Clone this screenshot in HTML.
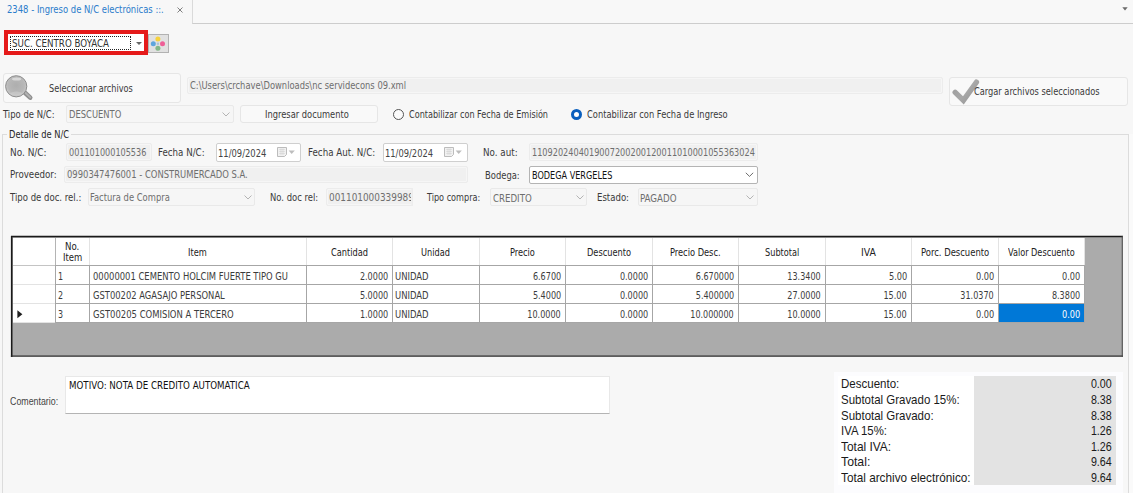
<!DOCTYPE html>
<html lang="es">
<head>
<meta charset="utf-8">
<title>2348 - Ingreso de N/C electrónicas</title>
<style>
html,body{margin:0;padding:0}
body{width:1133px;height:493px;overflow:hidden;background:#f7f7f7;position:relative;font-family:"DejaVu Sans Condensed","Liberation Sans",sans-serif;font-size:10px}
.b{position:absolute;box-sizing:border-box}
.x{position:absolute;white-space:pre;line-height:14px;height:14px}
.t{font-family:"DejaVu Sans Condensed","Liberation Sans",sans-serif}
.a{font-family:"Liberation Sans",sans-serif}
.dis{background:#f0f0f0;border:1px solid #ececec;border-radius:2px;box-shadow:inset 0 0 0 1px #f6f6f6}
.cmb{background:#f6f6f6;border:1px solid #e9e9e9;border-radius:2px}
.btn{background:#f9f9f9;border:1px solid #e6e6e6;border-radius:3px}
.date{background:#fff;border:1px solid #cfcfcf;border-radius:2px}
svg{position:absolute;overflow:visible}
.hl{position:absolute;background:#e3e3e3}
.vl{position:absolute;background:#a6a6a6;width:1px}
.rl{position:absolute;background:#a6a6a6;height:1px}
</style>
</head>
<body>
<!-- tab strip -->
<div class="b" style="left:192px;top:0;width:941px;height:24px;border-left:1px solid #dadada;border-bottom:1px solid #cdcdcd;background:#f8f8f8"></div>
<svg style="left:175.7px;top:6.2px" width="8" height="8" viewBox="0 0 8 8"><path d="M1.5 1.5 L6.5 6.5 M6.5 1.5 L1.5 6.5" stroke="#808080" stroke-width="1" fill="none"/></svg>
<svg style="left:1122px;top:7px" width="6" height="4" viewBox="0 0 6 4"><path d="M0.3 0.3 L5.7 0.3 L3 3.4 Z" fill="#6b6b6b"/></svg>

<!-- sucursal combo with red highlight -->
<div class="b" style="left:4px;top:30px;width:144px;height:25px;background:#e51a1a"></div>
<div class="b" style="left:8px;top:34px;width:136px;height:17px;background:#fff"></div>
<div class="b" style="left:10px;top:36px;width:121px;height:14px;border:1px dotted #222"></div>
<svg style="left:136px;top:42px" width="6" height="3" viewBox="0 0 6 3"><path d="M0 0 L6 0 L3 3 Z" fill="#666"/></svg>
<div class="b" style="left:148px;top:34px;width:21px;height:19px;background:#e1e1e1;border:1px solid #b2b2b2"></div>
<svg style="left:149px;top:35px" width="19" height="17" viewBox="149 35 19 17">
  <rect x="156.8" y="42.6" width="2.2" height="2.2" fill="#a9c4d8"/>
  <circle cx="157.9" cy="39.1" r="2.5" fill="#f7d23c"/>
  <circle cx="153.3" cy="43.7" r="2.5" fill="#5ea5dd"/>
  <circle cx="162.5" cy="43.7" r="2.5" fill="#ee5f97"/>
  <circle cx="157.9" cy="48.3" r="2.5" fill="#84b787"/>
</svg>

<!-- Seleccionar archivos button -->
<div class="b btn" style="left:3px;top:73px;width:178px;height:30px"></div>
<svg style="left:4px;top:74px" width="30" height="28" viewBox="4 74 30 28">
  <defs>
    <radialGradient id="g1" cx="0.5" cy="0.45" r="0.55">
      <stop offset="0" stop-color="#aeaeae"/><stop offset="0.7" stop-color="#b8b8b8"/><stop offset="1" stop-color="#cdcdcd"/>
    </radialGradient>
  </defs>
  <path d="M25.2 93 L30.2 97.6" stroke="#8f8f8f" stroke-width="4.6" stroke-linecap="round"/>
  <path d="M25.6 93 L30.2 97.4" stroke="#b2b2b2" stroke-width="2" stroke-linecap="round"/>
  <circle cx="16.2" cy="86.3" r="10.6" fill="url(#g1)" stroke="#8c8c8c" stroke-width="1"/>
  <ellipse cx="16.6" cy="79" rx="4.6" ry="1.6" fill="#dedede" opacity="0.85"/>
  <ellipse cx="16.2" cy="93.6" rx="6" ry="2" fill="#d2d2d2" opacity="0.5"/>
</svg>
<!-- path field -->
<div class="b dis" style="left:187px;top:77px;width:756px;height:17px"></div>
<!-- Cargar button -->
<div class="b btn" style="left:949px;top:77px;width:179px;height:29px"></div>
<svg style="left:950px;top:78px" width="32" height="27" viewBox="950 78 32 27">
  <defs><linearGradient id="g2" gradientUnits="userSpaceOnUse" x1="952" y1="80" x2="980" y2="104"><stop offset="0" stop-color="#9c9c9c"/><stop offset="0.5" stop-color="#a8a8a8"/><stop offset="1" stop-color="#8e8e8e"/></linearGradient></defs>
  <path d="M955.2 92.4 L963.4 100.4 L976.4 82.2" stroke="url(#g2)" stroke-width="5.4" stroke-linecap="round" stroke-linejoin="miter" fill="none"/>
</svg>

<!-- Tipo de N/C row -->
<div class="b cmb" style="left:66px;top:105px;width:168px;height:18px"></div>
<svg style="left:222px;top:112px" width="8" height="5" viewBox="0 0 8 5"><path d="M0.5 0.5 L4 4 L7.5 0.5" stroke="#b4b4b4" stroke-width="1" fill="none"/></svg>
<div class="b btn" style="left:240px;top:105px;width:138px;height:18px"></div>
<div class="b" style="left:393px;top:109px;width:11px;height:11px;border:1px solid #555;border-radius:50%;background:#fbfbfb"></div>
<div class="b" style="left:571px;top:109px;width:11px;height:11px;border:3.2px solid #0a5fbe;border-radius:50%;background:#fff"></div>

<!-- group box -->
<div class="b" style="left:2px;top:134px;width:1127px;height:380px;border:1px solid #dcdcdc"></div>
<div class="b" style="left:7px;top:128px;width:64px;height:12px;background:#f7f7f7"></div>

<div class="b" style="left:1129px;top:134px;width:4px;height:359px;background:#fafafa"></div>
<!-- row 1 fields -->
<div class="b dis" style="left:66px;top:143px;width:86px;height:18px"></div>
<div class="b date" style="left:216px;top:143px;width:85px;height:19px"></div>
<div class="b date" style="left:383px;top:143px;width:85px;height:19px"></div>
<svg style="left:277px;top:147px" width="19" height="10" viewBox="277 147 19 10">
  <path d="M277.5 147.5 H286.5 V154.5 L284.5 156.5 H277.5 Z" fill="#f1f1f1" stroke="#b4b4b4" stroke-width="0.9"/>
  <path d="M279.3 149.5 H284.8 M279.3 151.5 H284.8 M279.3 153.5 H284.8 M281 148.5 V155 M283 148.5 V155" stroke="#d6d6d6" stroke-width="0.7"/>
  <path d="M288.6 150.4 L294.8 150.4 L291.7 154 Z" fill="#bdbdbd"/>
</svg>
<svg style="left:444px;top:147px" width="19" height="10" viewBox="277 147 19 10">
  <path d="M277.5 147.5 H286.5 V154.5 L284.5 156.5 H277.5 Z" fill="#f1f1f1" stroke="#b4b4b4" stroke-width="0.9"/>
  <path d="M279.3 149.5 H284.8 M279.3 151.5 H284.8 M279.3 153.5 H284.8 M281 148.5 V155 M283 148.5 V155" stroke="#d6d6d6" stroke-width="0.7"/>
  <path d="M288.6 150.4 L294.8 150.4 L291.7 154 Z" fill="#bdbdbd"/>
</svg>
<div class="b dis" style="left:529px;top:143px;width:229px;height:18px"></div>

<!-- row 2 fields -->
<div class="b dis" style="left:64px;top:166px;width:404px;height:17px"></div>
<div class="b" style="left:529px;top:166px;width:229px;height:18px;background:#fff;border:1px solid #b4b4b4;border-radius:2px"></div>
<svg style="left:745px;top:172px" width="9" height="6" viewBox="0 0 9 6"><path d="M0.8 0.8 L4.5 4.4 L8.2 0.8" stroke="#5c5c5c" stroke-width="0.9" fill="none"/></svg>

<!-- row 3 fields -->
<div class="b cmb" style="left:88px;top:188px;width:167px;height:18px"></div>
<svg style="left:244px;top:195px" width="8" height="5" viewBox="0 0 8 5"><path d="M0.5 0.5 L4 4 L7.5 0.5" stroke="#b4b4b4" stroke-width="1" fill="none"/></svg>
<div class="b dis" style="left:326px;top:188px;width:87px;height:18px"></div>
<div class="b cmb" style="left:490px;top:188px;width:97px;height:18px"></div>
<svg style="left:576px;top:195px" width="8" height="5" viewBox="0 0 8 5"><path d="M0.5 0.5 L4 4 L7.5 0.5" stroke="#b4b4b4" stroke-width="1" fill="none"/></svg>
<div class="b cmb" style="left:638px;top:188px;width:120px;height:18px"></div>
<svg style="left:746px;top:195px" width="8" height="5" viewBox="0 0 8 5"><path d="M0.5 0.5 L4 4 L7.5 0.5" stroke="#b4b4b4" stroke-width="1" fill="none"/></svg>

<!-- grid -->
<div class="b" style="left:12px;top:237px;width:1110px;height:119px;background:#ababab"></div>
<svg style="left:0;top:0" width="1133" height="493" viewBox="0 0 1133 493"><path d="M11 236.5 H1123" fill="none" stroke="#1a1a1a" stroke-width="1.4"/><path d="M11.7 357 V236" fill="none" stroke="#1a1a1a" stroke-width="1.6"/><path d="M10.9 356.2 H1123" fill="none" stroke="#2a2a2a" stroke-width="1.2"/><path d="M1122.3 356.8 V236" fill="none" stroke="#4a4a4a" stroke-width="1.1"/></svg>
<div class="b" style="left:13px;top:238px;width:1072px;height:85px;background:#fff"></div>
<!-- selected cell -->
<div class="b" style="left:999px;top:304px;width:85px;height:18px;background:#0078d7"></div>
<!-- header separators (light) -->
<div class="hl" style="left:13px;top:265px;width:1072px;height:1px;background:#d9d9d9"></div>
<div class="hl" style="left:55px;top:238px;width:1px;height:27px;background:#b4b4b4"></div>
<div class="hl" style="left:89px;top:238px;width:1px;height:27px"></div>
<div class="hl" style="left:306px;top:238px;width:1px;height:27px"></div>
<div class="hl" style="left:392px;top:238px;width:1px;height:27px"></div>
<div class="hl" style="left:479px;top:238px;width:1px;height:27px"></div>
<div class="hl" style="left:565px;top:238px;width:1px;height:27px"></div>
<div class="hl" style="left:652px;top:238px;width:1px;height:27px"></div>
<div class="hl" style="left:738px;top:238px;width:1px;height:27px"></div>
<div class="hl" style="left:825px;top:238px;width:1px;height:27px"></div>
<div class="hl" style="left:911px;top:238px;width:1px;height:27px"></div>
<div class="hl" style="left:998px;top:238px;width:1px;height:27px"></div>
<div class="hl" style="left:1084px;top:238px;width:1px;height:27px"></div>
<!-- row header separators (light) -->
<div class="hl" style="left:13px;top:284px;width:42px;height:1px"></div>
<div class="hl" style="left:13px;top:303px;width:42px;height:1px"></div>
<div class="hl" style="left:13px;top:322px;width:42px;height:1px"></div>
<!-- data row lines -->
<div class="rl" style="left:13px;top:265px;width:42px;background:#c4c4c4"></div>
<div class="rl" style="left:55px;top:265px;width:1030px"></div>
<div class="rl" style="left:55px;top:284px;width:1030px"></div>
<div class="rl" style="left:55px;top:303px;width:1030px"></div>
<div class="rl" style="left:55px;top:322px;width:1030px"></div>
<div class="vl" style="left:55px;top:265px;height:58px"></div>
<div class="vl" style="left:89px;top:265px;height:58px"></div>
<div class="vl" style="left:306px;top:265px;height:58px"></div>
<div class="vl" style="left:392px;top:265px;height:58px"></div>
<div class="vl" style="left:479px;top:265px;height:58px"></div>
<div class="vl" style="left:565px;top:265px;height:58px"></div>
<div class="vl" style="left:652px;top:265px;height:58px"></div>
<div class="vl" style="left:738px;top:265px;height:58px"></div>
<div class="vl" style="left:825px;top:265px;height:58px"></div>
<div class="vl" style="left:911px;top:265px;height:58px"></div>
<div class="vl" style="left:998px;top:265px;height:58px"></div>
<div class="vl" style="left:1084px;top:265px;height:58px"></div>
<!-- current row marker -->
<svg style="left:17px;top:310px" width="6" height="9" viewBox="0 0 6 9"><path d="M0.4 0.3 L5.4 4.3 L0.4 8.3 Z" fill="#1e1e1e"/></svg>

<!-- comentario -->
<div class="b" style="left:65px;top:376px;width:545px;height:38px;background:#fff;border:1px solid #e8e8e8;border-bottom:1px solid #b4b4b4"></div>

<!-- totals panel -->
<div class="b" style="left:834px;top:372px;width:289px;height:130px;background:#fcfcfe"></div>
<div class="b" style="left:838px;top:376px;width:136px;height:109px;background:#fff"></div>
<div class="b" style="left:974px;top:376px;width:142px;height:109px;background:#e3e3e3"></div>

<span class="x t" style="left:7.00px;top:2.80px;transform-origin:0 50%;transform:scaleX(0.9778);font-size:9.6px;color:#2a7ccb">2348 - Ingreso de N/C electrónicas ::.</span>
<span class="x t" style="left:11.50px;top:37.00px;transform-origin:0 50%;transform:scaleX(1.0076);font-size:9.6px;color:#333">SUC. CENTRO BOYACA</span>
<span class="x t" style="left:48.80px;top:82.00px;transform-origin:0 50%;transform:scaleX(0.9432);font-size:9.6px;color:#3a3a3a">Seleccionar archivos</span>
<span class="x t" style="left:189.50px;top:79.30px;transform-origin:0 50%;transform:scaleX(0.9684);font-size:9.6px;color:#6e6e6e">C:\Users\crchave\Downloads\nc servidecons 09.xml</span>
<span class="x t" style="left:974.30px;top:85.00px;transform-origin:0 50%;transform:scaleX(0.9556);font-size:9.6px;color:#3a3a3a">Cargar archivos seleccionados</span>
<span class="x t" style="left:3.00px;top:108.40px;transform-origin:0 50%;transform:scaleX(0.9788);font-size:9.6px;color:#3a3a3a">Tipo de N/C:</span>
<span class="x t" style="left:68.50px;top:108.40px;transform-origin:0 50%;transform:scaleX(0.9702);font-size:9.6px;color:#6e6e6e">DESCUENTO</span>
<span class="x t" style="left:265.40px;top:108.40px;transform-origin:0 50%;transform:scaleX(0.9627);font-size:9.6px;color:#3a3a3a">Ingresar documento</span>
<span class="x t" style="left:408.80px;top:108.40px;transform-origin:0 50%;transform:scaleX(0.9397);font-size:9.6px;color:#3a3a3a">Contabilizar con Fecha de Emisión</span>
<span class="x t" style="left:587.30px;top:108.40px;transform-origin:0 50%;transform:scaleX(0.9642);font-size:9.6px;color:#3a3a3a">Contabilizar con Fecha de Ingreso</span>
<span class="x t" style="left:8.80px;top:128.00px;transform-origin:0 50%;transform:scaleX(0.9614);font-size:9.6px;color:#262626">Detalle de N/C</span>
<span class="x t" style="left:9.50px;top:146.00px;transform-origin:0 50%;transform:scaleX(1.0351);font-size:9.6px;color:#3a3a3a">No. N/C:</span>
<span class="x t" style="left:68.50px;top:146.00px;transform-origin:0 50%;transform:scaleX(0.9386);font-size:9.6px;color:#6e6e6e">001101000105536</span>
<span class="x t" style="left:157.50px;top:146.00px;transform-origin:0 50%;transform:scaleX(1.0062);font-size:9.6px;color:#3a3a3a">Fecha N/C:</span>
<span class="x t" style="left:217.50px;top:146.60px;transform-origin:0 50%;transform:scaleX(0.9709);font-size:9.6px;color:#444">11/09/2024</span>
<span class="x t" style="left:308.20px;top:146.00px;transform-origin:0 50%;transform:scaleX(1.0098);font-size:9.6px;color:#3a3a3a">Fecha Aut. N/C:</span>
<span class="x t" style="left:385.20px;top:146.60px;transform-origin:0 50%;transform:scaleX(0.9668);font-size:9.6px;color:#444">11/09/2024</span>
<span class="x t" style="left:483.10px;top:146.00px;transform-origin:0 50%;transform:scaleX(1.0144);font-size:9.6px;color:#3a3a3a">No. aut:</span>
<span class="x t" style="left:532.00px;top:146.00px;transform-origin:0 50%;transform:scaleX(0.9438);font-size:9.6px;color:#6e6e6e">1109202404019007200200120011010001055363024</span>
<span class="x t" style="left:9.50px;top:168.00px;transform-origin:0 50%;transform:scaleX(1.0057);font-size:9.6px;color:#3a3a3a">Proveedor:</span>
<span class="x t" style="left:66.50px;top:168.00px;transform-origin:0 50%;transform:scaleX(0.9744);font-size:9.6px;color:#6e6e6e">0990347476001 - CONSTRUMERCADO S.A.</span>
<span class="x t" style="left:484.50px;top:169.10px;transform-origin:0 50%;transform:scaleX(0.9723);font-size:9.6px;color:#3a3a3a">Bodega:</span>
<span class="x t" style="left:531.50px;top:169.10px;transform-origin:0 50%;transform:scaleX(0.9423);font-size:9.6px;color:#111">BODEGA VERGELES</span>
<span class="x t" style="left:9.50px;top:191.20px;transform-origin:0 50%;transform:scaleX(0.9890);font-size:9.6px;color:#3a3a3a">Tipo de doc. rel.:</span>
<span class="x t" style="left:90.00px;top:191.20px;transform-origin:0 50%;transform:scaleX(0.9717);font-size:9.6px;color:#6e6e6e">Factura de Compra</span>
<span class="x t" style="left:270.10px;top:191.20px;transform-origin:0 50%;transform:scaleX(0.9766);font-size:9.6px;color:#3a3a3a">No. doc rel:</span>
<span class="x t" style="left:328.50px;top:191.20px;transform-origin:0 50%;transform:scaleX(1.0308);font-size:9.6px;color:#6e6e6e">001101000339989</span>
<span class="x t" style="left:427.00px;top:191.20px;transform-origin:0 50%;transform:scaleX(0.9408);font-size:9.6px;color:#3a3a3a">Tipo compra:</span>
<span class="x t" style="left:492.50px;top:191.50px;transform-origin:0 50%;transform:scaleX(0.9991);font-size:9.6px;color:#6e6e6e">CREDITO</span>
<span class="x t" style="left:597.30px;top:191.20px;transform-origin:0 50%;transform:scaleX(0.9908);font-size:9.6px;color:#3a3a3a">Estado:</span>
<span class="x t" style="left:640.10px;top:191.50px;transform-origin:0 50%;transform:scaleX(1.0039);font-size:9.6px;color:#6e6e6e">PAGADO</span>
<span class="x t" style="left:65.00px;top:240.30px;transform-origin:0 50%;transform:scaleX(0.9991);font-size:9.6px;color:#222">No.</span>
<span class="x t" style="left:62.50px;top:250.50px;transform-origin:0 50%;transform:scaleX(0.9819);font-size:9.6px;color:#222">Item</span>
<span class="x t" style="left:188.00px;top:246.40px;transform-origin:0 50%;transform:scaleX(0.9564);font-size:9.6px;color:#222">Item</span>
<span class="x t" style="left:330.90px;top:246.40px;transform-origin:0 50%;transform:scaleX(0.9555);font-size:9.6px;color:#222">Cantidad</span>
<span class="x t" style="left:421.00px;top:246.40px;transform-origin:0 50%;transform:scaleX(0.9523);font-size:9.6px;color:#222">Unidad</span>
<span class="x t" style="left:509.80px;top:246.40px;transform-origin:0 50%;transform:scaleX(0.9537);font-size:9.6px;color:#222">Precio</span>
<span class="x t" style="left:586.70px;top:246.40px;transform-origin:0 50%;transform:scaleX(0.9561);font-size:9.6px;color:#222">Descuento</span>
<span class="x t" style="left:669.80px;top:246.40px;transform-origin:0 50%;transform:scaleX(0.9584);font-size:9.6px;color:#222">Precio Desc.</span>
<span class="x t" style="left:764.50px;top:246.40px;transform-origin:0 50%;transform:scaleX(0.9483);font-size:9.6px;color:#222">Subtotal</span>
<span class="x t" style="left:861.10px;top:246.40px;transform-origin:0 50%;transform:scaleX(1.0836);font-size:9.6px;color:#222">IVA</span>
<span class="x t" style="left:920.50px;top:246.40px;transform-origin:0 50%;transform:scaleX(0.9767);font-size:9.6px;color:#222">Porc. Descuento</span>
<span class="x t" style="left:1007.50px;top:246.40px;transform-origin:0 50%;transform:scaleX(0.9457);font-size:9.6px;color:#222">Valor Descuento</span>
<span class="x t" style="left:57.90px;top:269.70px;transform-origin:0 50%;transform:scaleX(0.9273);font-size:9.6px;color:#3c3c3c">1</span>
<span class="x t" style="left:92.50px;top:269.70px;transform-origin:0 50%;transform:scaleX(0.9739);font-size:9.6px;color:#3c3c3c">00000001 CEMENTO HOLCIM FUERTE TIPO GU</span>
<span class="x t" style="right:744.70px;top:269.70px;transform-origin:100% 50%;transform:scaleX(0.9370);font-size:9.6px;color:#3c3c3c">2.0000</span>
<span class="x t" style="left:394.80px;top:269.70px;transform-origin:0 50%;transform:scaleX(0.9779);font-size:9.6px;color:#3c3c3c">UNIDAD</span>
<span class="x t" style="right:571.90px;top:269.70px;transform-origin:100% 50%;transform:scaleX(0.9370);font-size:9.6px;color:#3c3c3c">6.6700</span>
<span class="x t" style="right:484.90px;top:269.70px;transform-origin:100% 50%;transform:scaleX(0.9370);font-size:9.6px;color:#3c3c3c">0.0000</span>
<span class="x t" style="right:398.90px;top:269.70px;transform-origin:100% 50%;transform:scaleX(0.9312);font-size:9.6px;color:#3c3c3c">6.670000</span>
<span class="x t" style="right:311.90px;top:269.70px;transform-origin:100% 50%;transform:scaleX(0.9337);font-size:9.6px;color:#3c3c3c">13.3400</span>
<span class="x t" style="right:225.90px;top:269.70px;transform-origin:100% 50%;transform:scaleX(0.9501);font-size:9.6px;color:#3c3c3c">5.00</span>
<span class="x t" style="right:138.90px;top:269.70px;transform-origin:100% 50%;transform:scaleX(0.9501);font-size:9.6px;color:#3c3c3c">0.00</span>
<span class="x t" style="right:52.90px;top:269.70px;transform-origin:100% 50%;transform:scaleX(0.9501);font-size:9.6px;color:#3c3c3c">0.00</span>
<span class="x t" style="left:57.90px;top:288.70px;transform-origin:0 50%;transform:scaleX(0.9273);font-size:9.6px;color:#3c3c3c">2</span>
<span class="x t" style="left:92.50px;top:288.70px;transform-origin:0 50%;transform:scaleX(0.9713);font-size:9.6px;color:#3c3c3c">GST00202 AGASAJO PERSONAL</span>
<span class="x t" style="right:744.70px;top:288.70px;transform-origin:100% 50%;transform:scaleX(0.9370);font-size:9.6px;color:#3c3c3c">5.0000</span>
<span class="x t" style="left:394.80px;top:288.70px;transform-origin:0 50%;transform:scaleX(0.9779);font-size:9.6px;color:#3c3c3c">UNIDAD</span>
<span class="x t" style="right:571.90px;top:288.70px;transform-origin:100% 50%;transform:scaleX(0.9370);font-size:9.6px;color:#3c3c3c">5.4000</span>
<span class="x t" style="right:484.90px;top:288.70px;transform-origin:100% 50%;transform:scaleX(0.9370);font-size:9.6px;color:#3c3c3c">0.0000</span>
<span class="x t" style="right:398.90px;top:288.70px;transform-origin:100% 50%;transform:scaleX(0.9312);font-size:9.6px;color:#3c3c3c">5.400000</span>
<span class="x t" style="right:311.90px;top:288.70px;transform-origin:100% 50%;transform:scaleX(0.9337);font-size:9.6px;color:#3c3c3c">27.0000</span>
<span class="x t" style="right:225.90px;top:288.70px;transform-origin:100% 50%;transform:scaleX(0.9424);font-size:9.6px;color:#3c3c3c">15.00</span>
<span class="x t" style="right:138.90px;top:288.70px;transform-origin:100% 50%;transform:scaleX(0.9337);font-size:9.6px;color:#3c3c3c">31.0370</span>
<span class="x t" style="right:52.90px;top:288.70px;transform-origin:100% 50%;transform:scaleX(0.9370);font-size:9.6px;color:#3c3c3c">8.3800</span>
<span class="x t" style="left:57.90px;top:307.70px;transform-origin:0 50%;transform:scaleX(0.9273);font-size:9.6px;color:#3c3c3c">3</span>
<span class="x t" style="left:92.50px;top:307.70px;transform-origin:0 50%;transform:scaleX(0.9796);font-size:9.6px;color:#3c3c3c">GST00205 COMISION A TERCERO</span>
<span class="x t" style="right:744.70px;top:307.70px;transform-origin:100% 50%;transform:scaleX(0.9370);font-size:9.6px;color:#3c3c3c">1.0000</span>
<span class="x t" style="left:394.80px;top:307.70px;transform-origin:0 50%;transform:scaleX(0.9779);font-size:9.6px;color:#3c3c3c">UNIDAD</span>
<span class="x t" style="right:571.90px;top:307.70px;transform-origin:100% 50%;transform:scaleX(0.9337);font-size:9.6px;color:#3c3c3c">10.0000</span>
<span class="x t" style="right:484.90px;top:307.70px;transform-origin:100% 50%;transform:scaleX(0.9370);font-size:9.6px;color:#3c3c3c">0.0000</span>
<span class="x t" style="right:398.90px;top:307.70px;transform-origin:100% 50%;transform:scaleX(0.9290);font-size:9.6px;color:#3c3c3c">10.000000</span>
<span class="x t" style="right:311.90px;top:307.70px;transform-origin:100% 50%;transform:scaleX(0.9337);font-size:9.6px;color:#3c3c3c">10.0000</span>
<span class="x t" style="right:225.90px;top:307.70px;transform-origin:100% 50%;transform:scaleX(0.9424);font-size:9.6px;color:#3c3c3c">15.00</span>
<span class="x t" style="right:138.90px;top:307.70px;transform-origin:100% 50%;transform:scaleX(0.9501);font-size:9.6px;color:#3c3c3c">0.00</span>
<span class="x t" style="right:52.90px;top:307.70px;transform-origin:100% 50%;transform:scaleX(0.9501);font-size:9.6px;color:#fff">0.00</span>
<span class="x t" style="left:68.70px;top:379.30px;transform-origin:0 50%;transform:scaleX(1.0070);font-size:9.6px;color:#111">MOTIVO: NOTA DE CREDITO AUTOMATICA</span>
<span class="x a" style="left:10.10px;top:394.20px;transform-origin:0 50%;transform:scaleX(0.8409);font-size:10.5px;color:#444">Comentario:</span>
<span class="x a" style="left:841.00px;top:377.40px;transform-origin:0 50%;transform:scaleX(0.9456);font-size:12.2px;color:#1a1a1a">Descuento:</span>
<span class="x a" style="right:20.80px;top:377.40px;transform-origin:100% 50%;transform:scaleX(0.8764);font-size:12.2px;color:#1a1a1a">0.00</span>
<span class="x a" style="left:841.00px;top:392.97px;transform-origin:0 50%;transform:scaleX(0.9410);font-size:12.2px;color:#1a1a1a">Subtotal Gravado 15%:</span>
<span class="x a" style="right:20.80px;top:392.97px;transform-origin:100% 50%;transform:scaleX(0.8764);font-size:12.2px;color:#1a1a1a">8.38</span>
<span class="x a" style="left:841.00px;top:408.54px;transform-origin:0 50%;transform:scaleX(0.9425);font-size:12.2px;color:#1a1a1a">Subtotal Gravado:</span>
<span class="x a" style="right:20.80px;top:408.54px;transform-origin:100% 50%;transform:scaleX(0.8764);font-size:12.2px;color:#1a1a1a">8.38</span>
<span class="x a" style="left:841.00px;top:424.11px;transform-origin:0 50%;transform:scaleX(0.9323);font-size:12.2px;color:#1a1a1a">IVA 15%:</span>
<span class="x a" style="right:20.80px;top:424.11px;transform-origin:100% 50%;transform:scaleX(0.8764);font-size:12.2px;color:#1a1a1a">1.26</span>
<span class="x a" style="left:841.00px;top:439.68px;transform-origin:0 50%;transform:scaleX(0.9773);font-size:12.2px;color:#1a1a1a">Total IVA:</span>
<span class="x a" style="right:20.80px;top:439.68px;transform-origin:100% 50%;transform:scaleX(0.8764);font-size:12.2px;color:#1a1a1a">1.26</span>
<span class="x a" style="left:841.00px;top:455.25px;transform-origin:0 50%;transform:scaleX(1.0055);font-size:12.2px;color:#1a1a1a">Total:</span>
<span class="x a" style="right:20.80px;top:455.25px;transform-origin:100% 50%;transform:scaleX(0.8764);font-size:12.2px;color:#1a1a1a">9.64</span>
<span class="x a" style="left:841.00px;top:470.82px;transform-origin:0 50%;transform:scaleX(0.9662);font-size:12.2px;color:#1a1a1a">Total archivo electrónico:</span>
<span class="x a" style="right:20.80px;top:470.82px;transform-origin:100% 50%;transform:scaleX(0.8764);font-size:12.2px;color:#1a1a1a">9.64</span>
<div class="b" style="left:411px;top:189px;width:1px;height:16px;background:#f0f0f0"></div>
<div class="b" style="left:412px;top:188px;width:1px;height:18px;background:#ededed"></div>
<div class="b" style="left:413px;top:188px;width:4px;height:18px;background:#f7f7f7"></div>
</body>
</html>
